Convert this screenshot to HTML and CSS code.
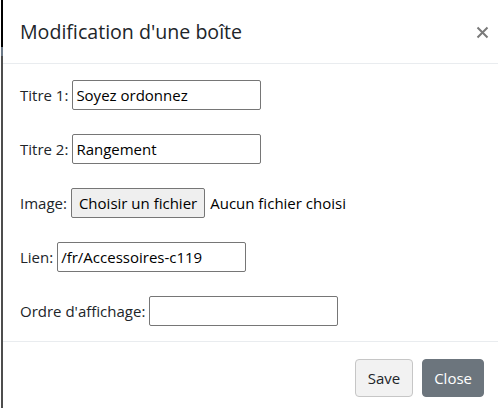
FILE: index.html
```html
<!DOCTYPE html>
<html lang="fr">
<head>
<meta charset="utf-8">
<link rel="stylesheet" href="styles.css">
</head>
<body>
<div class="modal">
  <div class="modal-header">
    <h5 class="modal-title">Modification d'une boîte</h5>
    <span class="close" aria-label="Close"><svg width="13" height="13" viewBox="0 0 13 13"><path d="M1.5 1.5 L11.5 11.5 M11.5 1.5 L1.5 11.5" stroke="#7a7a7a" stroke-width="2" fill="none"/></svg></span>
  </div>
  <div class="modal-body">
    <div class="row"><label>Titre 1:</label><input class="field" type="text" value="Soyez ordonnez"></div>
    <div class="row"><label>Titre 2:</label><input class="field" type="text" value="Rangement"></div>
    <div class="row"><label>Image:</label><span class="file-btn">Choisir un fichier</span><span class="file-name">Aucun fichier choisi</span></div>
    <div class="row"><label>Lien:</label><input class="field" type="text" value="/fr/Accessoires-c119"></div>
    <div class="row"><label>Ordre d'affichage:</label><input class="field" type="text" value=""></div>
  </div>
  <div class="modal-footer">
    <span class="btn btn-light">Save</span>
    <span class="btn btn-secondary">Close</span>
  </div>
</div>
</body>
</html>
```
FILE: styles.css
```css
html, body {
  margin: 0;
  padding: 0;
  background: #fff;
}
body {
  font-family: "Open Sans", "Noto Sans", sans-serif;
  font-size: 15px;
  color: #212529;
}
.modal {
  margin-left: 1px;
  border-left: 2px solid #4d4d4d;
  border-image: linear-gradient(to bottom, #000 0, #000 48px, #6b7886 48px, #6b7886 57px, #4d4d4d 57px) 1;
  height: 408px;
  box-sizing: border-box;
}
.modal-header {
  height: 64px;
  box-sizing: border-box;
  border-bottom: 1px solid #e9ecef;
  display: flex;
  align-items: center;
  justify-content: space-between;
  padding: 0 9px 0 17px;
}
.modal-title {
  margin: 0;
  font-size: 19.6px;
  font-weight: 500;
  color: #212529;
}
.close {
  display: flex;
  width: 13px;
  height: 13px;
  margin-top: 1px;
}
.modal-body {
  padding: 16px 0 15px 17px;
  display: flex;
  flex-direction: column;
  gap: 24px;
}
.row {
  display: flex;
  align-items: center;
  height: 30px;
  white-space: nowrap;
}
.row label {
  margin-right: 4px;
}
.field {
  width: 189px;
  height: 30px;
  box-sizing: border-box;
  border: 1px solid #767676;
  border-radius: 2px;
  padding: 1px 3px;
  font-family: inherit;
  font-size: 15px;
  color: #000;
}
.file-btn {
  height: 30px;
  box-sizing: border-box;
  display: inline-flex;
  align-items: center;
  padding: 0 7px;
  border: 1px solid #767676;
  border-radius: 2px;
  background: #efefef;
  color: #000;
}
.file-name {
  margin-left: 5px;
  color: #000;
}
.modal-footer {
  border-top: 1px solid #e9ecef;
  display: flex;
  justify-content: flex-end;
  gap: 9px;
  padding: 17px 14px 0 0;
}
.btn {
  height: 38px;
  box-sizing: border-box;
  display: inline-flex;
  align-items: center;
  padding: 0 12px;
  border-radius: 4px;
  font-size: 15px;
}
.btn-light {
  background: #f2f2f2;
  border: 1px solid #c6c6c6;
  color: #212529;
}
.btn-secondary {
  padding: 0 11px;
  background: #6c757d;
  border: 1px solid #6c757d;
  color: #fff;
}
```
